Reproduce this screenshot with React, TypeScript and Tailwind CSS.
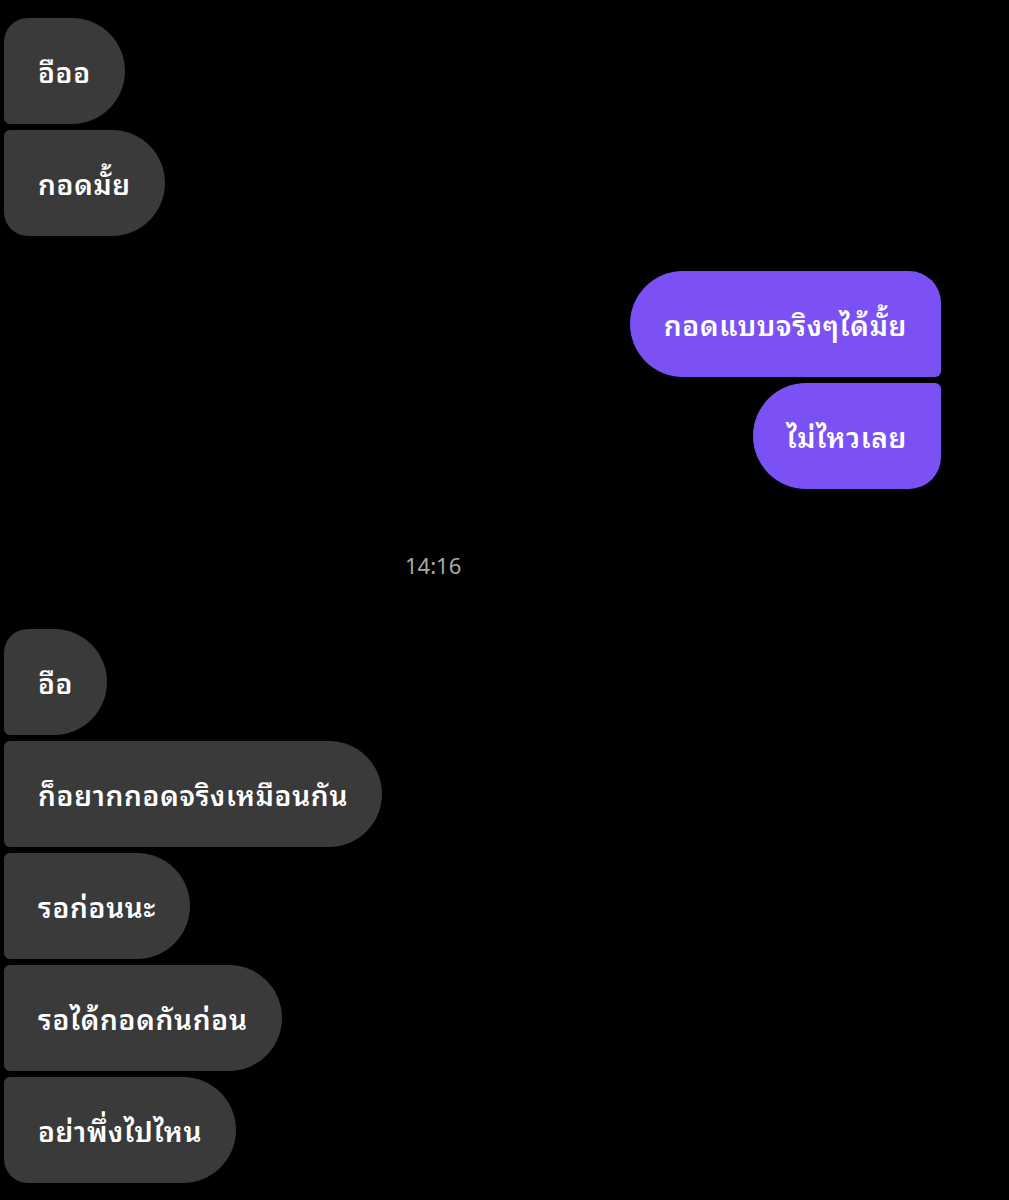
import React from 'react';

type Pos = 'first' | 'middle' | 'last';

const leftShape: Record<Pos, string> = {
  first: 'rounded-tl-[24px] rounded-bl-[6px]',
  middle: 'rounded-tl-[6px] rounded-bl-[6px]',
  last: 'rounded-tl-[6px] rounded-bl-[24px]',
};

const rightShape: Record<Pos, string> = {
  first: 'rounded-tr-[32px] rounded-br-[6px]',
  middle: 'rounded-tr-[6px] rounded-br-[6px]',
  last: 'rounded-tr-[6px] rounded-br-[32px]',
};

function Bubble({ text, side, pos }: { text: string; side: 'in' | 'out'; pos: Pos }) {
  const base =
    'flex h-[106px] items-center px-[34px] text-[28px] font-semibold leading-none tracking-[0.7px] text-white whitespace-nowrap';
  if (side === 'in') {
    return (
      <div className="flex justify-start">
        <div className={`${base} rounded-r-[53px] bg-[#3a3a3a] ${leftShape[pos]}`}>{text}</div>
      </div>
    );
  }
  return (
    <div className="flex justify-end">
      <div className={`${base} rounded-l-[53px] bg-[#7b51f6] ${rightShape[pos]}`}>{text}</div>
    </div>
  );
}

export default function App() {
  return (
    <div
      className="h-[1200px] w-[1009px] overflow-hidden bg-black"
      style={{ fontFamily: '"Noto Sans Thai Looped", "Noto Sans", "Noto Sans Thai", sans-serif' }}
    >
      <div className="flex flex-col gap-[6px] pl-[4px] pr-[68px] pt-[18px]">
        <Bubble side="in" pos="first" text="อืออ" />
        <Bubble side="in" pos="last" text="กอดมั้ย" />

        <div className="mt-[29px] flex flex-col gap-[6px]">
          <Bubble side="out" pos="first" text="กอดแบบจริงๆได้มั้ย" />
          <Bubble side="out" pos="last" text="ไม่ไหวเลย" />
        </div>

        <div className="flex h-[128px] items-center pl-[401px] pt-[10px] text-[22px] text-[#a8a8a8]">14:16</div>

        <Bubble side="in" pos="first" text="อือ" />
        <Bubble side="in" pos="middle" text="ก็อยากกอดจริงเหมือนกัน" />
        <Bubble side="in" pos="middle" text="รอก่อนนะ" />
        <Bubble side="in" pos="middle" text="รอได้กอดกันก่อน" />
        <Bubble side="in" pos="last" text="อย่าพึ่งไปไหน" />
      </div>
    </div>
  );
}
